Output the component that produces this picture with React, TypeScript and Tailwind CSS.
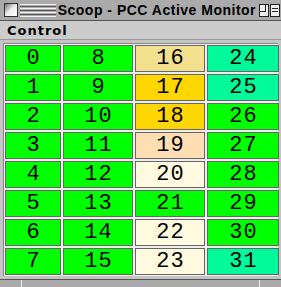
import React from 'react';

type Cell = { n: number; bg: string };

const colors: Record<number, string> = {
  16: 'bg-[#f3e08c]',
  17: 'bg-[#ffd700]',
  18: 'bg-[#ffd700]',
  19: 'bg-[#ffdeb4]',
  20: 'bg-[#fffae0]',
  21: 'bg-[#00ff00]',
  22: 'bg-[#fffae0]',
  23: 'bg-[#fffae0]',
  24: 'bg-[#00fa9a]',
  25: 'bg-[#00fa9a]',
  31: 'bg-[#00fa9a]',
};

// row-major order: row r holds r, r+8, r+16, r+24
const cells: Cell[] = [];
for (let r = 0; r < 8; r++) {
  for (let c = 0; c < 4; c++) {
    const n = r + c * 8;
    cells.push({ n, bg: colors[n] ?? 'bg-[#00ff00]' });
  }
}

const Stripes = ({ className }: { className: string }) => (
  <div className={`flex flex-col justify-between h-[13px] ${className}`}>
    {[0, 1, 2, 3, 4, 5, 6].map((i) => (
      <div key={i} className={i % 2 === 0 ? 'h-px bg-[#f4f4f4]' : 'h-px bg-[#5a5a5a]'} />
    ))}
  </div>
);

export default function App() {
  return (
    <div
      className="w-[281px] h-[287px] bg-[#c4c4c4] flex flex-col overflow-hidden"
      style={{ fontFamily: '"DejaVu Sans", sans-serif' }}
    >
      {/* Title bar */}
      <div className="h-[21px] bg-[#aaaaaa] border-b border-[#555] flex items-center pl-[4px] pr-[1px]">
        <div className="w-[14px] h-[14px] border border-[#333] bg-gradient-to-br from-[#777] via-[#eee] to-[#fff]" />
        <Stripes className="w-[36px] ml-[2px]" />
        <span
          className="mx-[2px] text-[14px] font-bold text-black leading-none whitespace-nowrap tracking-[0.5px]"
          style={{ fontFamily: '"Liberation Sans", sans-serif' }}
        >
          Scoop - PCC Active Monitor
        </span>
        <Stripes className="flex-1" />
        <div className="w-[10px] h-[13px] border border-[#222] bg-[#eee] ml-[1px] relative">
          <div className="absolute left-0 top-0 w-[6px] h-[7px] border-r border-b border-[#222]" />
        </div>
        <div className="w-[10px] h-[13px] border border-[#222] bg-[#eee] ml-[1px] flex flex-col justify-center gap-[2px] px-[1px]">
          <div className="h-px bg-[#222]" />
          <div className="h-px bg-[#222]" />
        </div>
      </div>

      {/* Menu bar */}
      <div className="h-[19px] bg-[#cccccc] flex items-center pl-[7px] border-b border-[#999]">
        <span className="text-[13px] font-bold tracking-[1px] text-black leading-none">Control</span>
      </div>

      {/* Grid */}
      <div className="flex-1 px-[3px] pt-[3px] bg-[#c4c4c4]">
        <div className="grid grid-cols-[56px_70px_70px_72px] gap-[2px] bg-[#eeeeee] p-[1px] border-l border-t border-[#888]">
          {cells.map((c) => (
            <div
              key={c.n}
              className={`h-[27px] border border-[#666] ${c.bg} flex items-center justify-center text-[22px] leading-none text-black tracking-[1px] pl-[1px]`}
              style={{ fontFamily: '"Liberation Mono", monospace' }}
            >
              {c.n}
            </div>
          ))}
        </div>
      </div>

      {/* Bottom bar */}
      <div className="h-[8px] mt-auto border-t border-[#555] bg-[#aaaaaa] flex">
        <div className="w-[22px] border-r border-[#eee]" />
        <div className="w-[238px] border-r border-[#eee]" />
        <div className="flex-1" />
      </div>
    </div>
  );
}
